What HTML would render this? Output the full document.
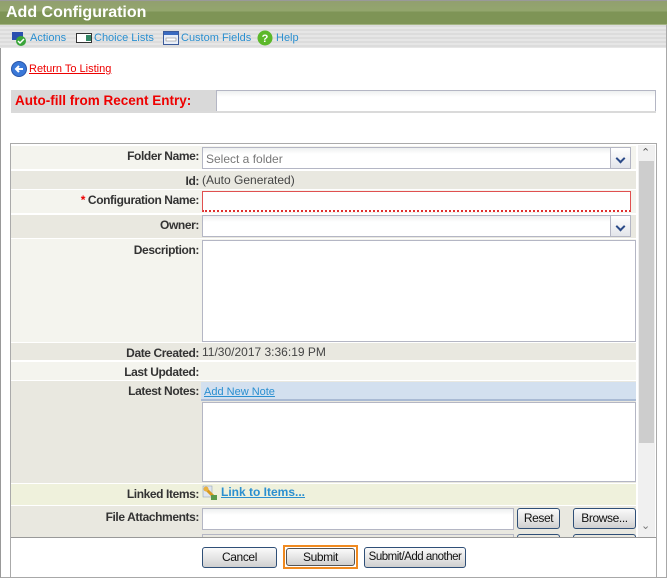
<!DOCTYPE html>
<html><head><meta charset="utf-8"><style>
*{margin:0;padding:0;box-sizing:border-box}
body{width:667px;height:578px;background:#fff;position:relative;overflow:hidden;font-family:"Liberation Sans",Arial,sans-serif;font-size:12px}
.a{position:absolute}
.lbl{position:absolute;left:11px;width:188px;text-align:right;font-weight:bold;color:#333;font-size:12px;letter-spacing:-0.4px;padding-top:3px;white-space:nowrap}
.row{position:absolute;left:11px;width:625px}
.lt{background:#f4f4ee}.dk{background:#e9e8e0}
.val{position:absolute;left:202px;color:#444;font-size:12px}
.inp{position:absolute;background:linear-gradient(#eef0f0,#fff 6px);border:1px solid #b4b6c4}
.btn{position:absolute;height:21px;border:1px solid #2f4f77;border-radius:3px;background:linear-gradient(#fafafa,#e2e2e2 60%,#cfcfcf);font-size:12px;color:#111;text-align:center;line-height:19px;letter-spacing:-0.4px;white-space:nowrap;overflow:hidden}
.dd{position:absolute;right:0;top:0;width:20px;height:100%;border-left:1px solid #b4b6c4;background:linear-gradient(#fff,#e3e5ea)}
.dd:after{content:"";position:absolute;left:6px;top:7px;width:5px;height:5px;border-right:2px solid #2b4a88;border-bottom:2px solid #2b4a88;transform:rotate(45deg)}
</style></head><body>
<div class="a" style="left:0;top:0;width:667px;height:578px;border-left:1px solid #999;border-right:1px solid #a8a8a8;border-bottom:1px solid #a8a8a8"></div>
<div class="a" style="left:0;top:0;width:667px;height:25px;background:linear-gradient(#929f6f 0,#93a66d 10px,#7e9456 11px,#7e9456 23px,#c8d2b0 24px);border-top:1px solid #999"></div>
<div class="a" style="left:6px;top:4px;color:#fff;font-weight:bold;font-size:16px">Add Configuration</div>
<div class="a" style="left:0;top:25px;width:666px;height:23px;background:repeating-linear-gradient(#dcdcdc 0,#dcdcdc 2px,#e6e6e6 2px,#e6e6e6 4px)"></div>
<div class="a" style="top:31px;left:0;font-size:11px;color:#2a8fd0;white-space:nowrap">
<svg class="a" style="left:11px;top:0" width="16" height="16"><rect x="1" y="1" width="11" height="8" fill="#2a4fb0"/><circle cx="10" cy="10" r="5" fill="#3aa53a"/><path d="M7 10l2 2 4-4" stroke="#fff" stroke-width="1.5" fill="none"/></svg>
<span class="a" style="left:30px;top:1px">Actions</span>
<svg class="a" style="left:76px;top:2px" width="16" height="10"><rect x="0.5" y="0.5" width="15" height="9" fill="#fff" stroke="#333"/><rect x="10" y="2" width="5" height="6" fill="#386"/></svg>
<span class="a" style="left:94px;top:1px">Choice Lists</span>
<svg class="a" style="left:163px;top:0" width="16" height="14"><rect x="0.5" y="0.5" width="15" height="13" fill="#e8eef8" stroke="#3a5a9a"/><rect x="1" y="1" width="14" height="3" fill="#3a6ac0"/><rect x="3" y="7" width="10" height="3" fill="#fff" stroke="#777" stroke-width=".5"/></svg>
<span class="a" style="left:181px;top:1px">Custom Fields</span>
<svg class="a" style="left:257px;top:-1px" width="16" height="16"><circle cx="8" cy="8" r="7.5" fill="#5cb82a"/><text x="8" y="12" font-size="11" font-weight="bold" fill="#fff" text-anchor="middle" font-family="Liberation Sans">?</text></svg>
<span class="a" style="left:276px;top:1px">Help</span>
</div>
<svg class="a" style="left:11px;top:61px" width="16" height="16"><circle cx="8" cy="8" r="7.5" fill="#3a78d8" stroke="#2a55a8"/><path d="M12 8H5M8 5L5 8l3 3" stroke="#fff" stroke-width="2" fill="none"/></svg>
<div class="a" style="left:29px;top:63px;color:#e00;font-size:11px;text-decoration:underline">Return To Listing</div>
<div class="a" style="left:11px;top:90px;width:205px;height:22px;background:#d9d9d9"></div>
<div class="a" style="left:15px;top:93px;color:#e00;font-weight:bold;font-size:13.5px">Auto-fill from Recent Entry:</div>
<div class="inp" style="left:216px;top:90px;width:440px;height:22px"></div>
<div class="a" style="left:11px;top:111px;width:645px;height:2px;background:#dadada"></div>

<div class="a" style="left:10px;top:143px;width:647px;height:434px;border:1px solid #aaa;border-bottom:none"></div>
<div class="a" style="left:638px;top:145px;width:17px;height:392px;background:#f0f0f0"></div>
<div class="a" style="left:639px;top:161px;width:15px;height:282px;background:#cdcdcd"></div>
<div class="a" style="left:641px;top:146px;font-size:11px;color:#555">&#8963;</div>
<div class="a" style="left:641px;top:519px;font-size:11px;color:#777">&#8964;</div>

<div class="row lt" style="top:146px;height:23px"></div>
<div class="lbl" style="top:146px">Folder Name:</div>
<div class="inp" style="left:202px;top:147px;width:429px;height:22px"><span style="position:absolute;left:3px;top:4px;color:#777">Select a folder</span><div class="dd"></div></div>
<div class="row dk" style="top:171px;height:18px"></div>
<div class="lbl" style="top:171px">Id:</div>
<div class="val" style="top:173px">(Auto Generated)</div>
<div class="row lt" style="top:190px;height:23px"></div>
<div class="lbl" style="top:190px"><span style="color:#e00">* </span>Configuration Name:</div>
<div class="a" style="left:202px;top:191px;width:429px;height:21px;border:1px solid #e05050;background:#fff;border-bottom:2px dotted #e03030"></div>
<div class="row dk" style="top:215px;height:23px"></div>
<div class="lbl" style="top:215px">Owner:</div>
<div class="inp" style="left:202px;top:215px;width:429px;height:22px"><div class="dd"></div></div>
<div class="row lt" style="top:239px;height:103px"></div>
<div class="lbl" style="top:240px">Description:</div>
<div class="a" style="left:202px;top:240px;width:434px;height:102px;border:1px solid #b4b6c4;background:#fff"></div>
<div class="row dk" style="top:343px;height:17px"></div>
<div class="lbl" style="top:343px">Date Created:</div>
<div class="val" style="top:345px">11/30/2017 3:36:19 PM</div>
<div class="row lt" style="top:362px;height:18px"></div>
<div class="lbl" style="top:362px">Last Updated:</div>
<div class="row dk" style="top:381px;height:102px"></div>
<div class="lbl" style="top:381px">Latest Notes:</div>
<div class="a" style="left:201px;top:382px;width:435px;height:19px;background:#d3e0ef;border-bottom:2px solid #a9bad4"></div>
<div class="a" style="left:204px;top:386px;color:#2a8fd0;font-size:11px;text-decoration:underline">Add New Note</div>
<div class="a" style="left:202px;top:402px;width:434px;height:80px;border:1px solid #b4b6c4;background:#fff"></div>
<div class="row" style="top:484px;height:21px;background:#eff1dc"></div>
<div class="lbl" style="top:484px">Linked Items:</div>
<svg class="a" style="left:202px;top:485px" width="16" height="16"><rect x="1" y="1" width="9" height="11" fill="#dfe6f0" stroke="#8899aa" stroke-width=".5"/><path d="M3 3l9 9" stroke="#d79a20" stroke-width="3"/><circle cx="4" cy="4" r="2.5" fill="#e8b040"/><rect x="9" y="10" width="6" height="5" fill="#5a9a4a"/></svg>
<div class="a" style="left:221px;top:485px;color:#2a8fd0;font-weight:bold;font-size:12px;text-decoration:underline">Link to Items...</div>
<div class="row dk" style="top:506px;height:31px"></div>
<div class="lbl" style="top:507px">File Attachments:</div>
<div class="inp" style="left:202px;top:508px;width:312px;height:22px"></div>
<div class="btn" style="left:517px;top:508px;width:43px">Reset</div>
<div class="btn" style="left:573px;top:508px;width:63px">Browse...</div>
<div class="a" style="left:202px;top:534px;width:312px;height:3px;border:1px solid #b4b6c4;border-bottom:none"></div>
<div class="a" style="left:517px;top:534px;width:43px;height:3px;border:1px solid #2f4f77;border-bottom:none;border-radius:3px 3px 0 0"></div>
<div class="a" style="left:573px;top:534px;width:63px;height:3px;border:1px solid #2f4f77;border-bottom:none;border-radius:3px 3px 0 0"></div>
<div class="a" style="left:11px;top:537px;width:645px;height:1px;background:#999"></div>
<div class="btn" style="left:202px;top:547px;width:75px">Cancel</div>
<div class="a" style="left:283px;top:545px;width:75px;height:24px;border:2px solid #f08a20"></div>
<div class="btn" style="left:286px;top:548px;width:69px;height:18px;line-height:17px;border-color:#555">Submit</div>
<div class="btn" style="left:364px;top:547px;width:102px;font-size:11.5px;letter-spacing:-0.5px">Submit/Add another</div>
</body></html>
